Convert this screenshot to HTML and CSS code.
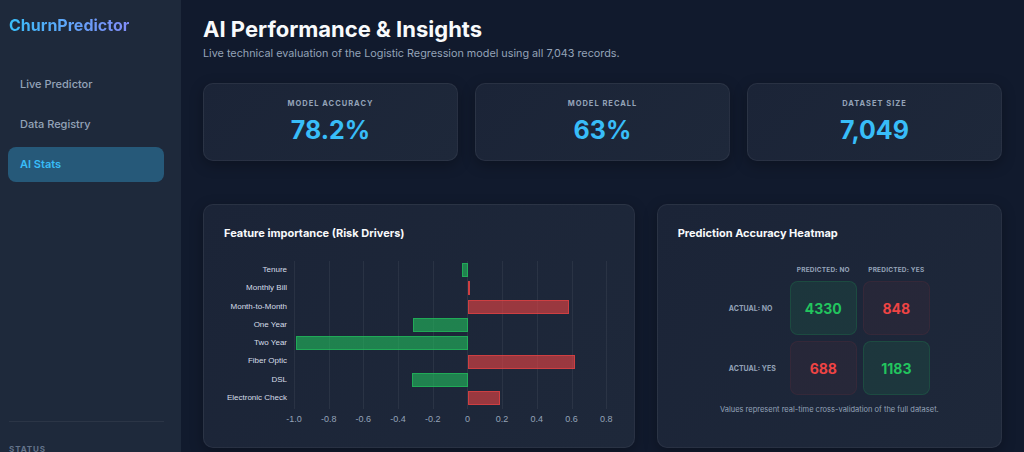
FILE: index.html
```html
<!DOCTYPE html>
<html lang="en">
<head>
<meta charset="utf-8">
<title>ChurnPredictor – AI Stats</title>
<link rel="stylesheet" href="styles.css">
</head>
<body>
<div class="app">
  <aside class="sidebar">
    <div class="logo">ChurnPredictor</div>
    <nav class="nav">
      <a class="nav-item">Live Predictor</a>
      <a class="nav-item">Data Registry</a>
      <a class="nav-item active">AI Stats</a>
    </nav>
    <div class="sidebar-footer">
      <div class="footer-label">Status</div>
      <div class="status-row"><span class="dot"></span>Model Online</div>
    </div>
  </aside>

  <main class="main">
    <h1 class="title">AI Performance &amp; Insights</h1>
    <p class="subtitle">Live technical evaluation of the Logistic Regression model using all 7,043 records.</p>

    <section class="stats">
      <div class="stat-card">
        <div class="stat-label">Model Accuracy</div>
        <div class="stat-value">78.2%</div>
      </div>
      <div class="stat-card">
        <div class="stat-label">Model Recall</div>
        <div class="stat-value">63%</div>
      </div>
      <div class="stat-card">
        <div class="stat-label">Dataset Size</div>
        <div class="stat-value">7,049</div>
      </div>
    </section>

    <section class="panels">
      <div class="panel">
        <h2 class="panel-title">Feature importance (Risk Drivers)</h2>
        <div class="chart">
          <div class="labels">
            <div class="label">Tenure</div>
            <div class="label">Monthly Bill</div>
            <div class="label">Month-to-Month</div>
            <div class="label">One Year</div>
            <div class="label">Two Year</div>
            <div class="label">Fiber Optic</div>
            <div class="label">DSL</div>
            <div class="label">Electronic Check</div>
          </div>
          <div class="plot">
            <div class="track"><div class="bar neg" style="margin-left:168px;width:5.5px"></div></div>
            <div class="track"><div class="bar pos" style="margin-left:173.5px;width:1.5px"></div></div>
            <div class="track"><div class="bar pos" style="margin-left:173.5px;width:101.5px"></div></div>
            <div class="track"><div class="bar neg" style="margin-left:119px;width:54.5px"></div></div>
            <div class="track"><div class="bar neg" style="margin-left:2px;width:171.5px"></div></div>
            <div class="track"><div class="bar pos" style="margin-left:173.5px;width:107.5px"></div></div>
            <div class="track"><div class="bar neg" style="margin-left:118px;width:55.5px"></div></div>
            <div class="track"><div class="bar pos" style="margin-left:173.5px;width:32px"></div></div>
          </div>
          <div class="ticks">
            <span>-1.0</span><span>-0.8</span><span>-0.6</span><span>-0.4</span><span>-0.2</span>
            <span>0</span><span>0.2</span><span>0.4</span><span>0.6</span><span>0.8</span>
          </div>
        </div>
      </div>

      <div class="panel">
        <h2 class="panel-title">Prediction Accuracy Heatmap</h2>
        <div class="heatmap">
          <div class="hm-empty"></div>
          <div class="hm-head">Predicted: No</div>
          <div class="hm-head">Predicted: Yes</div>
          <div class="hm-row">Actual: No</div>
          <div class="cell good">4330</div>
          <div class="cell bad">848</div>
          <div class="hm-row">Actual: Yes</div>
          <div class="cell bad">688</div>
          <div class="cell good">1183</div>
        </div>
        <p class="hm-note">Values represent real-time cross-validation of the full dataset.</p>
      </div>
    </section>
  </main>
</div>
</body>
</html>
```
FILE: styles.css
```css
* { box-sizing: border-box; }
html, body { margin: 0; padding: 0; }
body {
  background: #111a2d;
  font-family: Inter, "Noto Sans", sans-serif;
  color: #f1f5f9;
  overflow: hidden;
}
.app {
  display: flex;
  align-items: stretch;
}

/* Sidebar */
.sidebar {
  width: 181px;
  flex: none;
  background: #1e293b;
  padding: 15px 17px 0 8px;
  display: flex;
  flex-direction: column;
  align-items: stretch;
}
.logo {
  align-self: flex-start;
  font-size: 16px;
  font-weight: 700;
  line-height: 21px;
  padding-left: 1px;
  background: linear-gradient(90deg, #38bdf8 0%, #60a5fa 50%, #818cf8 100%);
  -webkit-background-clip: text;
  background-clip: text;
  color: transparent;
}
.nav {
  display: flex;
  flex-direction: column;
  gap: 5px;
  margin-top: 31px;
}
.nav-item {
  display: block;
  height: 35px;
  line-height: 35px;
  padding-left: 12px;
  border-radius: 8px;
  font-size: 11px;
  font-weight: 500;
  color: #94a3b8;
}
.nav-item.active {
  background: rgba(56, 189, 248, 0.33);
  color: #38bdf8;
  font-weight: 600;
}
.sidebar-footer {
  margin-top: auto;
  border-top: 1px solid rgba(255, 255, 255, 0.06);
  margin-left: 1px;
  padding: 22px 0 24px 0;
}
.footer-label {
  font-size: 8px;
  font-weight: 700;
  letter-spacing: 0.9px;
  text-transform: uppercase;
  color: #64748b;
  line-height: 10px;
}
.status-row {
  margin-top: 8px;
  font-size: 11px;
  color: #94a3b8;
  display: flex;
  align-items: center;
  gap: 6px;
}
.dot { width: 7px; height: 7px; border-radius: 50%; background: #22c55e; }

/* Main */
.main {
  flex: 1;
  padding: 14px 22px 52px 22px;
}
.title {
  margin: 0;
  font-size: 22px;
  line-height: 30px;
  font-weight: 700;
  color: #f8fafc;
}
.subtitle {
  margin: 2px 0 0 0;
  font-size: 10.8px;
  line-height: 16px;
  color: #94a3b8;
}
.stats {
  display: grid;
  grid-template-columns: repeat(3, 1fr);
  gap: 17px;
  margin-top: 21px;
}
.stat-card {
  background: linear-gradient(135deg, #1b2437, #1e283a);
  border: 1px solid rgba(255, 255, 255, 0.06);
  border-radius: 10px;
  padding: 15px 12px 15px;
  text-align: center;
  box-shadow: 0 4px 14px rgba(0, 0, 0, 0.28);
}
.stat-label {
  font-size: 7.5px;
  line-height: 10px;
  font-weight: 700;
  letter-spacing: 1px;
  text-transform: uppercase;
  color: #94a3b8;
}
.stat-value {
  margin-top: 6px;
  font-size: 25px;
  line-height: 30px;
  font-weight: 700;
  color: #38bdf8;
}

.panels {
  display: grid;
  grid-template-columns: 5fr 4fr;
  gap: 22px;
  margin-top: 43px;
}
.panel {
  height: 244px;
  background: linear-gradient(135deg, #1b2437, #1e283a);
  border: 1px solid rgba(255, 255, 255, 0.06);
  border-radius: 10px;
  padding: 21px 20px;
  box-shadow: 0 4px 14px rgba(0, 0, 0, 0.28);
}
.panel-title {
  margin: 0;
  font-size: 11px;
  line-height: 14px;
  font-weight: 700;
  color: #f8fafc;
}

/* Bar chart */
.chart {
  margin-top: 21px;
  display: grid;
  grid-template-columns: 63px 313.3px;
  column-gap: 7px;
  font-family: "Liberation Sans", Arial, sans-serif;
}
.labels { display: flex; flex-direction: column; }
.label {
  height: 18.3px;
  line-height: 18.3px;
  text-align: right;
  font-size: 8px;
  color: #d6dde8;
  white-space: nowrap;
}
.plot {
  display: flex;
  flex-direction: column;
  background: repeating-linear-gradient(90deg, rgba(255, 255, 255, 0.06) 0 1px, transparent 1px 34.7px);
  padding-bottom: 1.5px;
}
.track {
  height: 18.3px;
  display: flex;
  align-items: center;
}
.bar { height: 14px; flex: none; }
.bar.pos { background: rgba(239, 68, 68, 0.6); border: 1px solid rgba(239, 68, 68, 0.62); }
.bar.neg { background: rgba(34, 197, 94, 0.58); border: 1px solid rgba(34, 197, 94, 0.6); }
.ticks {
  grid-column: 2;
  display: flex;
  margin-left: -17.35px;
  margin-top: 4px;
}
.ticks span {
  width: 34.7px;
  flex: none;
  text-align: center;
  font-size: 9px;
  line-height: 12px;
  color: #94a3b8;
}

/* Heatmap */
.heatmap {
  margin: 25px auto 0;
  display: grid;
  grid-template-columns: 55px 67px 67px;
  grid-template-rows: 10px 54px 54px;
  column-gap: 6px;
  row-gap: 6px;
  width: 201px;
}
.hm-head {
  font-size: 6.5px;
  font-weight: 700;
  letter-spacing: 0.2px;
  text-transform: uppercase;
  text-align: center;
  line-height: 10px;
  color: #94a3b8;
  white-space: nowrap;
}
.hm-row {
  font-size: 7px;
  font-weight: 700;
  text-transform: uppercase;
  color: #94a3b8;
  display: flex;
  align-items: center;
  white-space: nowrap;
}
.cell {
  border-radius: 8px;
  display: flex;
  align-items: center;
  justify-content: center;
  font-size: 14px;
  font-weight: 700;
}
.cell.good {
  background: rgba(34, 197, 94, 0.1);
  border: 1px solid rgba(34, 197, 94, 0.15);
  color: #22c55e;
}
.cell.bad {
  background: rgba(239, 68, 68, 0.05);
  border: 1px solid rgba(239, 68, 68, 0.07);
  color: #ef4444;
}
.hm-note {
  margin: 10px 0 0 0;
  text-align: center;
  font-size: 7.5px;
  line-height: 10px;
  color: #94a3b8;
}
```
